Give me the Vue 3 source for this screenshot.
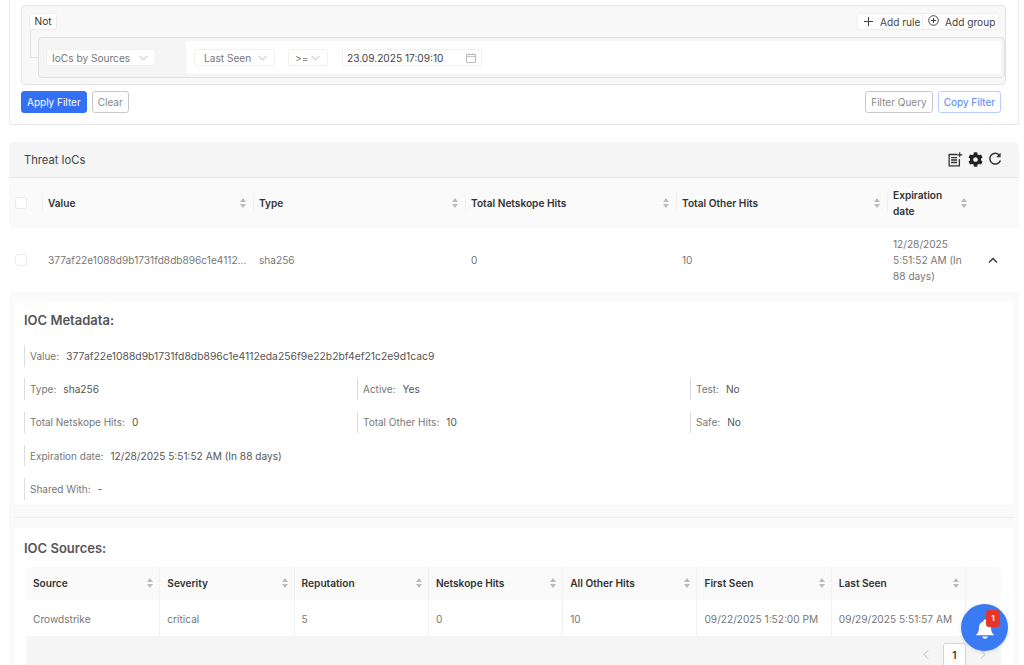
<template>
  <div class="page">
    <section class="filter-card">
      <div class="builder">
        <div class="builder-head">
          <span class="chip">Not</span>
          <div class="add-group">
            <button class="add-btn rule-btn">
              <svg width="9" height="9" viewBox="0 0 9 9"><path d="M4.500 0v9M0 4.500h9" stroke="#444" stroke-width="1" fill="none" /></svg>
              Add rule
            </button>
            <button class="add-btn group-btn">
              <svg class="up" width="11" height="11" viewBox="0 0 11 11"><circle cx="5.500" cy="5.500" r="4.800" stroke="#444" fill="none" /><path d="M5.500 3v5M3 5.500h5" stroke="#444" fill="none" /></svg>
              Add group
            </button>
          </div>
        </div>
        <div class="rule">
          <div class="select field-select">
            <span>IoCs by Sources</span>
            <svg width="9" height="6" viewBox="0 0 9 6"><path d="M.5 .8 4.500 5 8.500 .8" stroke="#bbb" fill="none" /></svg>
          </div>
          <div class="rule-body">
            <div class="select seen-select">
              <span>Last Seen</span>
              <svg width="9" height="6" viewBox="0 0 9 6"><path d="M.5 .8 4.500 5 8.500 .8" stroke="#bbb" fill="none" /></svg>
            </div>
            <div class="select op-select">
              <span>&gt;=</span>
              <svg width="9" height="6" viewBox="0 0 9 6"><path d="M.5 .8 4.500 5 8.500 .8" stroke="#bbb" fill="none" /></svg>
            </div>
            <div class="select date-select">
              <span class="date-text">23.09.2025 17:09:10</span>
              <svg width="10" height="10" viewBox="0 0 10 10"><path d="M.5 1.500h9v8h-9zM.5 3.700h9M2.800 .3v2M7.200 .3v2" stroke="#bbb" fill="none" /></svg>
            </div>
          </div>
        </div>
      </div>
      <div class="filter-actions">
        <button class="btn primary">Apply Filter</button>
        <button class="btn">Clear</button>
        <span class="spacer"></span>
        <button class="btn">Filter Query</button>
        <button class="btn outline">Copy Filter</button>
      </div>
    </section>

    <section class="table-card">
      <header class="card-head">
        <span class="card-title">Threat IoCs</span>
        <div class="card-icons">
          <svg width="16" height="15" viewBox="0 0 15 15"><path d="M10 2.500H1.600v11.300h10.300V7" stroke="#333" stroke-width="1.300" fill="none" /><path d="M3.600 5.600h6M3.600 8h6M3.600 10.500h6" stroke="#333" stroke-width="1.300" fill="none" /><path d="M12.200 .3v5M9.800 2.800h5" stroke="#333" stroke-width="1.200" fill="none" /></svg>
          <svg width="15" height="15" viewBox="0 0 512 512"><path fill="#222" d="M487 316l-42-25c4-23 4-47 0-70l42-25c5-3 7-9 5-14-11-35-30-67-54-93-4-4-10-5-15-2l-42 24c-18-15-38-27-60-35V28c0-6-4-10-9-11-36-8-73-8-108 0-5 1-9 5-9 11v48c-22 8-42 20-60 35L93 87c-5-3-11-2-15 2-24 26-43 58-54 93-2 5 0 11 5 14l42 25c-4 23-4 47 0 70l-42 25c-5 3-7 9-5 14 11 35 30 67 54 93 4 4 10 5 15 2l42-24c18 15 38 27 60 35v48c0 6 4 10 9 11 36 8 73 8 108 0 5-1 9-5 9-11v-48c22-8 42-20 60-35l42 24c5 3 11 2 15-2 24-26 43-58 54-93 2-5 0-11-5-14zM256 336c-44 0-80-36-80-80s36-80 80-80 80 36 80 80-36 80-80 80z" /></svg>
          <svg width="14" height="14" viewBox="0 0 14 14"><path d="M11.600 3.400A5.400 5.400 0 1 0 12.400 8.400" stroke="#333" stroke-width="1.500" fill="none" /><path d="M12.600 .8v4.400H8.200z" fill="#333" /></svg>
        </div>
      </header>

      <div class="ioc-grid ioc-head">
        <div class="cell check-cell"><span class="checkbox"></span></div>
        <div v-for="col in iocColumns" :key="col" class="cell head-cell">
          <span>{{ col }}</span>
          <span class="sorter"><i class="up-caret"></i><i class="down-caret"></i></span>
        </div>
        <div class="cell"></div>
      </div>
      <div class="ioc-grid ioc-row">
        <div class="cell check-cell"><span class="checkbox"></span></div>
        <div class="cell body-cell">377af22e1088d9b1731fd8db896c1e4112...</div>
        <div class="cell body-cell">sha256</div>
        <div class="cell body-cell">0</div>
        <div class="cell body-cell">10</div>
        <div class="cell body-cell exp-cell">12/28/2025 5:51:52 AM (In 88 days)</div>
        <div class="cell expand-cell">
          <svg width="10" height="7" viewBox="0 0 10 7"><path d="M1 5.600 5 1.600 9 5.600" stroke="#333" stroke-width="1.400" fill="none" /></svg>
        </div>
      </div>

      <div class="expanded">
        <div class="panel meta-panel">
          <h3>IOC Metadata:</h3>
          <div class="meta-grid">
            <div v-for="item in metadata" :key="item.label" class="meta-item" :class="{ wide: item.wide }">
              <span class="meta-label">{{ item.label }}:</span>
              <span class="meta-value">{{ item.value }}</span>
            </div>
          </div>
        </div>
        <div class="divider"></div>
        <div class="panel sources-panel">
          <h3>IOC Sources:</h3>
          <div class="sources">
            <div class="src-grid src-head">
              <div v-for="col in sourceColumns" :key="col" class="src-cell src-head-cell">
                <span>{{ col }}</span>
                <span class="sorter"><i class="up-caret"></i><i class="down-caret"></i></span>
              </div>
              <div class="src-end"></div>
            </div>
            <div class="src-grid src-row">
              <div v-for="(val, i) in sourceRow" :key="i" class="src-cell">{{ val }}</div>
              <div class="src-end"></div>
            </div>
            <div class="pager">
              <svg width="6" height="9" viewBox="0 0 6 9"><path d="M5 .5 1 4.500 5 8.500" stroke="#bbb" fill="none" /></svg>
              <span class="page-num">1</span>
              <svg width="6" height="9" viewBox="0 0 6 9"><path d="M1 .5 5 4.500 1 8.500" stroke="#bbb" fill="none" /></svg>
            </div>
          </div>
        </div>
      </div>
    </section>

    <button class="bell">
      <svg width="20" height="22" viewBox="0 0 22 24"><path fill="#fff" d="M11 1.500c-1 0-1.700.7-1.700 1.700v.6C6.200 4.600 4.300 7.200 4.300 10.300c0 3.900-.8 5.900-2.300 7.300-.6.6-.8 1-.8 1.400h19.600c0-.4-.2-.8-.8-1.400-1.500-1.400-2.300-3.400-2.300-7.300 0-3.100-1.900-5.700-5-6.500v-.6c0-1-.7-1.700-1.700-1.700zM8 20.300c.2 1.500 1.500 2.500 3 2.500s2.800-1 3-2.500z" /></svg>
      <span class="badge">1</span>
    </button>
  </div>
</template>

<script setup>
const iocColumns = ['Value', 'Type', 'Total Netskope Hits', 'Total Other Hits', 'Expiration date']

const metadata = [
  { label: 'Value', value: '377af22e1088d9b1731fd8db896c1e4112eda256f9e22b2bf4ef21c2e9d1cac9', wide: true },
  { label: 'Type', value: 'sha256' },
  { label: 'Active', value: 'Yes' },
  { label: 'Test', value: 'No' },
  { label: 'Total Netskope Hits', value: '0' },
  { label: 'Total Other Hits', value: '10' },
  { label: 'Safe', value: 'No' },
  { label: 'Expiration date', value: '12/28/2025 5:51:52 AM (In 88 days)', wide: true },
  { label: 'Shared With', value: '-', wide: true }
]

const sourceColumns = ['Source', 'Severity', 'Reputation', 'Netskope Hits', 'All Other Hits', 'First Seen', 'Last Seen']
const sourceRow = ['Crowdstrike', 'critical', '5', '0', '10', '09/22/2025 1:52:00 PM', '09/29/2025 5:51:57 AM']
</script>

<style>
html, body { margin: 0; background: #fff; overflow: hidden; }
#app { height: 665px; overflow: hidden; }
</style>

<style scoped>
.page { font-family: Inter, "Liberation Sans", sans-serif; font-size: 10.15px; color: #666; padding: 0 5px 0 9px; }
button { font-family: inherit; }

.filter-card { border: 1px solid #e8e8e8; border-top: 0; border-radius: 0 0 3px 3px; padding: 5px 12px 11px 11px; }
.builder { background: #f8f8f8; border: 1px solid #e4e4e4; border-radius: 4px; height: 71px; position: relative; padding: 7px 0 0 7px; }
.builder::before { content: ""; position: absolute; left: 8px; top: 24px; width: 8px; height: 27px; border-left: 1px solid #e0e0e0; border-bottom: 1px solid #e0e0e0; }
.builder-head { display: flex; justify-content: space-between; height: 17px; padding-right: 6px; }
.chip { background: #fff; border: 1px solid #eee; border-radius: 3px; color: #333; padding: 0 4.500px; line-height: 15px; }
.add-group { display: flex; background: #fff; border: 1px solid #eee; border-radius: 3px; box-sizing: border-box; height: 17px; }
.add-btn { background: none; border: 0; color: #444; font-size: 10.15px; display: flex; align-items: center; height: 15px; white-space: nowrap; }
.rule-btn { width: 65px; padding: 0 0 0 6px; gap: 7px; border-right: 1px solid #eee; }
.group-btn { width: 75px; padding: 0 0 0 5px; gap: 6px; }
.up { margin-top: -3px; }

.rule { margin: 7px 0 0 9px; height: 41px; border: 1px solid #e0e0e0; border-radius: 4px; box-sizing: border-box; background: #f5f5f5; display: flex; align-items: center; padding: 3px 3px 3px 7px; }
.select { background: #fff; border: 1px solid #f0f0f0; border-radius: 3px; height: 17px; box-sizing: border-box; display: flex; align-items: center; justify-content: space-between; color: #777; flex: none; }
.field-select { width: 110px; padding: 0 7px 0 5px; margin-right: 30px; }
.rule-body { flex: 1; height: 33px; background: #fff; border-radius: 3px; display: flex; align-items: center; padding-left: 8px; }
.seen-select { width: 81px; padding: 0 7px 0 9px; margin-right: 13px; }
.op-select { width: 40px; padding: 0 7px 0 6px; margin-right: 14px; }
.date-select { width: 140px; padding: 0 5px 0 4px; }
.date-text { color: #444; }

.filter-actions { display: flex; margin: 6px 5px 0 0; gap: 5px; }
.spacer { flex: 1; }
.btn { height: 22px; box-sizing: border-box; padding: 0 5px; background: #fff; border: 1px solid #c8c8c8; border-radius: 3px; color: #888; font-size: 10px; }
.primary { background: #3370f6; border-color: #3370f6; color: #fff; }
.outline { border-color: #b8ceff; color: #4f83f5; }

.table-card { margin-top: 17px; border-radius: 5px 5px 0 0; overflow: hidden; }
.card-head { height: 35px; background: #f5f5f5; border-bottom: 1px solid #e8e8e8; display: flex; align-items: center; justify-content: space-between; padding: 0 17px 0 15px; }
.card-title { font-size: 11.200px; color: #444; }
.card-icons { display: flex; align-items: center; gap: 5px; margin-top: -1px; }

.ioc-grid { display: grid; grid-template-columns: 33px 211px 212px 211px 211px 87px 45px; }
.ioc-head { height: 50px; background: #fafafa; }
.ioc-row { height: 64px; background: #fff; }
.cell { display: flex; align-items: center; padding: 0 6px; }
.check-cell { padding: 0 0 0 6px; }
.checkbox { width: 12px; height: 12px; border: 1px solid #ececec; border-radius: 3px; background: #fff; box-sizing: border-box; }
.head-cell { justify-content: space-between; font-weight: 600; color: #333; line-height: 16px; padding: 0 7px 1px 6px; position: relative; }
.head-cell::before { content: ""; position: absolute; left: 0; top: 15px; height: 18px; width: 1px; background: #f0f0f0; }
.sorter { display: flex; flex-direction: column; gap: 2px; flex: none; }
.up-caret { width: 0; height: 0; border: 3.500px solid transparent; border-top: 0; border-bottom: 4px solid #bbb; }
.down-caret { width: 0; height: 0; border: 3.500px solid transparent; border-bottom: 0; border-top: 4px solid #bbb; }
.body-cell { color: #777; }
.exp-cell { line-height: 16px; }
.expand-cell { justify-content: flex-end; padding-right: 21px; }

.expanded { background: #fafafa; padding: 9px 5px 0; }
.panel { background: #fff; }
.meta-panel { height: 204px; box-sizing: border-box; padding: 11px 10px 0; }
h3 { margin: 0; font-size: 13px; line-height: 17px; font-weight: 600; color: #555; }
.meta-grid { display: grid; grid-template-columns: repeat(3, 333px); row-gap: 11.750px; margin-top: 16px; }
.meta-item { height: 21.500px; border-left: 1px solid #ddd; padding-left: 5px; display: flex; align-items: center; gap: 7px; }
.meta-item.wide { grid-column: 1 / -1; }
.meta-item:first-child .meta-value { font-size: 10.350px; }
.meta-label { color: #777; font-size: 10px; }
.meta-value { color: #555; }
.divider { height: 1px; background: #efefef; margin-top: 12px; }
.sources-panel { margin-top: 10px; padding: 12px 13px 0 10px; height: 137px; box-sizing: border-box; }
.sources { margin: 10px 0 0 2px; background: #f5f5f5; border-radius: 5px 5px 0 0; overflow: hidden; }
.src-grid { display: grid; grid-template-columns: repeat(7, 134.300px) 1fr; }
.src-head { height: 33px; background: #fafafa; }
.src-row { height: 36px; background: #fff; }
.src-cell { display: flex; align-items: center; padding: 1px 6px 0 7px; border-right: 1px solid #f2f2f2; color: #777; }
.src-head-cell { justify-content: space-between; font-weight: 600; color: #333; padding: 0 6px 1px 7px; }
.pager { height: 40px; display: flex; justify-content: flex-end; align-items: flex-start; padding: 7px 15px 0 0; gap: 14px; }
.pager svg { margin-top: 7px; }
.page-num { width: 23px; height: 24px; box-sizing: border-box; border: 1px solid #c4d4f5; border-radius: 3px; background: #fff; color: #333; font-weight: 600; display: flex; align-items: center; justify-content: center; }

.bell { position: fixed; left: 961px; top: 604px; width: 47px; height: 47px; border: 0; border-radius: 50%; background: #3a7af3; padding: 0; display: flex; align-items: center; justify-content: center; box-shadow: 0 1px 4px rgba(0, 0, 0, .12); }
.bell svg { margin-top: 2px; }
.badge { position: absolute; left: 25px; top: 6px; width: 14px; height: 17px; border-radius: 3px; background: #e8352b; color: #fff; font-size: 8px; font-weight: 700; line-height: 16px; text-align: center; }
</style>
